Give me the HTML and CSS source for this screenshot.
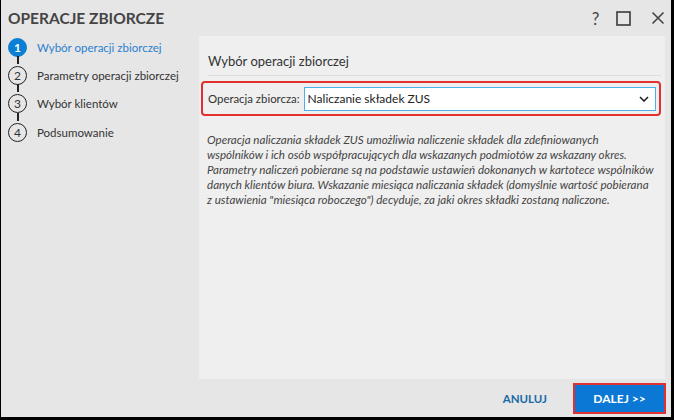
FILE: index.html
```html
<!DOCTYPE html>
<html>
	<head>
		<meta charset="utf-8"/>
		<title>Operacje zbiorcze</title>
		<link rel="stylesheet" href="styles.css">
	</head>
	<body>
		<div class="window">
			<header class="titlebar">
				<h1>OPERACJE ZBIORCZE</h1>
				<div class="controls">
					<span class="ctl help">?</span>
					<span class="ctl max">
						<svg width="15" height="15" viewBox="0 0 15 15"><rect x="1" y="1" width="13" height="13" fill="none" stroke="#444" stroke-width="1.7"/></svg>
					</span>
					<span class="ctl">
						<svg width="14" height="14" viewBox="0 0 14 14"><path d="M1.5 1.5 L12.5 12.5 M12.5 1.5 L1.5 12.5" stroke="#444" stroke-width="1.6"/></svg>
					</span>
				</div>
			</header>
			<div class="body">
				<ol class="steps">
					<li class="step active"><span class="num">1</span>Wybór operacji zbiorczej</li>
					<li class="step"><span class="num">2</span>Parametry operacji zbiorczej</li>
					<li class="step"><span class="num">3</span>Wybór klientów</li>
					<li class="step last"><span class="num">4</span>Podsumowanie</li>
				</ol>
				<main class="panel">
					<h2>Wybór operacji zbiorczej</h2>
					<div class="field">
						<label>Operacja zbiorcza:</label>
						<div class="select">
							<span>Naliczanie składek ZUS</span>
							<svg width="10" height="6" viewBox="0 0 10 6"><path d="M1 1 L5 5 L9 1" fill="none" stroke="#222" stroke-width="1.6"/></svg>
						</div>
					</div>
					<p class="desc">
						Operacja naliczania składek ZUS umożliwia naliczenie składek dla zdefiniowanych<br>
						wspólników i ich osób współpracujących dla wskazanych podmiotów za wskazany okres.<br>
						Parametry naliczeń pobierane są na podstawie ustawień dokonanych w kartotece wspólników<br>
						danych klientów biura. Wskazanie miesiąca naliczania składek (domyślnie wartość pobierana<br>
						z ustawienia "miesiąca roboczego") decyduje, za jaki okres składki zostaną naliczone.
					</p>
				</main>
			</div>
			<footer class="footer">
				<button class="btn-link">ANULUJ</button>
				<button class="btn-primary">DALEJ &gt;&gt;</button>
			</footer>
		</div>
	</body>
</html>
```

FILE: styles.css
```css
html, body {
	margin: 0;
	padding: 0;
	background: #000;
}
body {
	font-family: 'Lato', 'Open Sans', sans-serif;
	color: #333;
}
.window {
	width: 670px;
	height: 417px;
	margin: 0 0 0 1px;
	background: #e6e6e6;
	display: flex;
	flex-direction: column;
	box-sizing: border-box;
}
.titlebar {
	height: 36px;
	display: flex;
	align-items: center;
	justify-content: space-between;
	padding: 0 0 0 7px;
	flex: none;
}
.titlebar h1 {
	margin: 0;
	font-size: 15.5px;
	font-weight: 700;
	color: #444;
}
.controls {
	display: flex;
	align-items: center;
	gap: 12px;
	padding-right: 6px;
}
.ctl {
	width: 15px;
	display: flex;
	justify-content: center;
	align-items: center;
}
.ctl.max {
	margin-right: 7px;
}
.help {
	font-size: 17px;
	color: #444;
	margin-right: 1px;
}
.body {
	flex: 1;
	display: flex;
}
.steps {
	list-style: none;
	margin: -3px 0 0 0;
	padding: 0 0 0 7px;
	width: 191px;
	flex: none;
}
.step {
	position: relative;
	display: flex;
	align-items: center;
	height: 28.3px;
	font-size: 11.5px;
	color: #333;
	white-space: nowrap;
}
.step::after {
	content: "";
	position: absolute;
	left: 9px;
	top: 23px;
	height: 8px;
	width: 2px;
	background: #222;
}
.step.last::after {
	display: none;
}
.num {
	width: 17px;
	height: 17px;
	border: 1.5px solid #222;
	border-radius: 50%;
	display: flex;
	align-items: center;
	justify-content: center;
	font-size: 12px;
	margin-right: 10px;
	background: #e6e6e6;
	flex: none;
}
.step.active {
	color: #2a80d0;
}
.step.active .num {
	background: #0a7fd4;
	border-color: #0a7fd4;
	color: #fff;
	font-weight: 700;
}
.panel {
	flex: none;
	width: 466px;
	background: #efefef;
	padding: 17px 4px 0 2px;
	box-sizing: border-box;
}
.panel h2 {
	margin: 0 0 5px 7px;
	font-size: 13px;
	font-weight: 400;
	color: #333;
	padding-bottom: 6px;
	border-bottom: 1px solid #dcdcdc;
}
.field {
	display: flex;
	align-items: center;
	border: 2px solid #e03030;
	border-radius: 4px;
	padding: 2px 3px 2px 5px;
	height: 27px;
}
.field label {
	font-size: 11.4px;
	color: #333;
	margin-right: 4px;
}
.select {
	flex: 1;
	display: flex;
	align-items: center;
	justify-content: space-between;
	height: 22px;
	border: 1.5px solid #4eb0ea;
	background: #fff;
	padding: 0 6px 0 3px;
	font-size: 12px;
	color: #222;
}
.desc {
	margin: 16px 0 0 6px;
	font-size: 11.6px;
	font-style: italic;
	line-height: 15px;
	color: #444;
	white-space: nowrap;
}
.footer {
	height: 38px;
	flex: none;
	display: flex;
	align-items: center;
	justify-content: flex-end;
	padding-right: 5px;
	gap: 26px;
}
.btn-link {
	background: none;
	border: none;
	font-family: inherit;
	font-size: 11.5px;
	font-weight: 700;
	color: #1a6aa8;
	padding: 0;
	cursor: pointer;
}
.btn-primary {
	width: 93px;
	height: 31px;
	background: #0a78d4;
	border: 2px solid #e03030;
	color: #fff;
	font-family: inherit;
	font-size: 12px;
	font-weight: 700;
	cursor: pointer;
}
```
